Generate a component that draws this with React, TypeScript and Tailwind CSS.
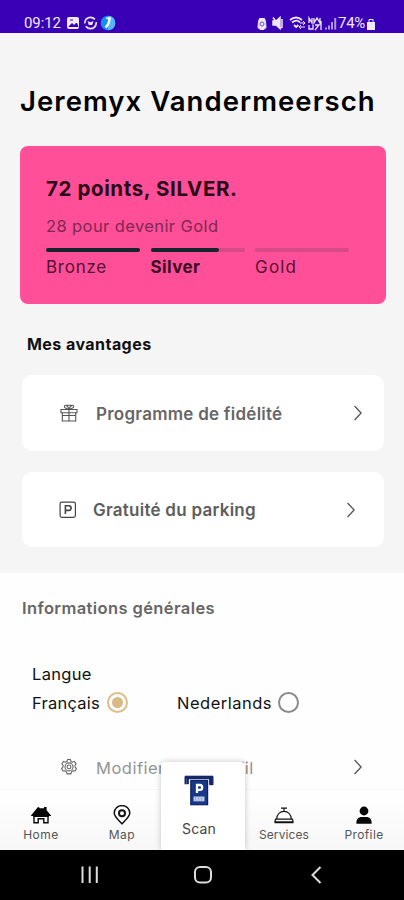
import React from 'react';

interface IconProps {
  className?: string;
}

const GiftIcon: React.FC<IconProps> = ({ className }) => (
  <svg viewBox="0 0 18 18" className={className} fill="none" stroke="currentColor" strokeWidth="1.1">
    <path d="M1 5.5h16v3.2H1zM2.3 8.7V17h13.4V8.7M9 5.5V17M2.3 11.5h13.4" />
    <path d="M9 5.3C7.8 2 5.6.3 4.6 1.7S5.6 5 9 5.3zM9 5.3c1.2-3.3 3.4-5 4.4-3.6S12.4 5 9 5.3zM6.5 1.3h5" />
  </svg>
);

const ParkingIcon: React.FC<IconProps> = ({ className }) => (
  <svg viewBox="0 0 18 18" className={className} fill="none" stroke="currentColor" strokeWidth="1.2">
    <rect x="1.1" y="1.1" width="15.3" height="15.3" rx="1.8" />
    <path d="M6.4 13V4.8h3.4a2.3 2.3 0 0 1 0 4.6H6.4" strokeWidth="1.6" />
  </svg>
);

const GearIcon: React.FC<IconProps> = ({ className }) => (
  <svg viewBox="0 0 18 18" className={className} fill="none" stroke="currentColor" strokeWidth="1.1">
    <path d="M7.6 1.5h2.8l.6 2 1.5.7 1.9-.8 1.7 2.3-1.2 1.7.2 1.7 1.3 1.5-1.4 2.4-2.1-.2-1.4 1-.6 2.1H7.1l-.6-2.1-1.4-1-2.1.2-1.4-2.4 1.3-1.5.2-1.7-1.2-1.7 1.7-2.3 1.9.8 1.5-.7z" />
    <circle cx="9" cy="8.9" r="4" />
    <circle cx="9" cy="8.9" r="1.9" />
  </svg>
);

const Chevron: React.FC<IconProps> = ({ className }) => (
  <svg viewBox="0 0 8 16" className={className} fill="none" stroke="#555" strokeWidth="1.3">
    <path d="M.6 1l6.5 7-6.5 7" />
  </svg>
);

const HomeIcon = () => (
  <svg viewBox="0 0 20 18" className="h-[18px] w-5" fill="#080808">
    <path d="M0 9.4L7.2.8 9 2.2h4V1h2.6v3.2L20 9.4v.6H0z" />
    <path d="M3 9.5h14v7.2h-4.2v-4H7.2v4H3z" fill="#fff" stroke="#080808" strokeWidth="1.4" />
    <path d="M2.3 9h15.4v2H2.3z" />
  </svg>
);

const PinIcon = () => (
  <svg viewBox="0 0 18 20" className="h-5 w-[18px]" fill="none" stroke="#111">
    <path d="M9 18.8C6 15.5 1.2 11.5 1.2 7.9a7.8 7.3 0 0 1 15.6 0c0 3.6-4.8 7.6-7.8 10.9z" strokeWidth="1.5" />
    <circle cx="9" cy="8.3" r="3" strokeWidth="2" />
  </svg>
);

const BellIcon = () => (
  <svg viewBox="0 0 20 17" className="h-[17px] w-5" fill="none" stroke="#111" strokeWidth="1.2">
    <path d="M7 1.2h6M10 1.2v3M2.7 12C3 7.4 6 4.4 10 4.4s7 3 7.3 7.6zM1.5 12.2h17l.6 3H.9z" />
    <path d="M.8 15.4h18.4" strokeWidth="1.7" />
  </svg>
);

const ProfileIcon = () => (
  <svg viewBox="0 0 16 18" className="h-[18px] w-4" fill="#080808">
    <circle cx="8" cy="5" r="4.4" />
    <path d="M.4 17.8v-1.5c0-3.1 2.3-5.3 5-5.3h5.2c2.7 0 5 2.2 5 5.3v1.5z" />
  </svg>
);

const ScanIcon = () => (
  <svg viewBox="0 0 30 31" className="h-[31px] w-[30px]" fill="none">
    <path d="M1.6 9.2V2h26.8v7.2h-2.2V4" stroke="#14286b" strokeWidth="2.2" strokeLinejoin="round" />
    <path d="M3.8 9.2V4" stroke="#14286b" strokeWidth="2.2" />
    <path d="M1 .7h28v3.6H1z" fill="#14286b" />
    <rect x="6.8" y="5.5" width="16.8" height="24.2" fill="#17388a" stroke="#0d2260" strokeWidth="1.2" />
    <path d="M13 18V10h2.8a2.4 2.4 0 0 1 0 4.8H13" stroke="#fff" strokeWidth="2.3" />
    <path d="M9.5 21.5h11v4.8h-11z" fill="#bcc8e4" />
    <path d="M11.5 21.5v4.8M14.5 21.5v4.8M17.5 21.5v4.8" stroke="#8fa1cc" strokeWidth=".7" />
  </svg>
);

const StatusBar = () => (
  <header className="flex h-[33px] shrink-0 items-end bg-[#3a00b5] pl-6 pr-7 pb-px text-[#eee8ff]">
    <span className="w-[42px] font-['Roboto'] text-[15px] leading-[17px] tracking-[-0.1px]">09:12</span>
    <svg viewBox="0 0 50 17" className="h-[17px] w-[50px]" fill="none">
      <rect x="1" y="2" width="12" height="12" rx="2" fill="currentColor" />
      <path d="M3 11.5l3-3 2 2 2.5-2.5 1.5 3.5zM4 5h3" fill="#3a00b5" stroke="#3a00b5" />
      <circle cx="24.5" cy="8" r="5.7" stroke="currentColor" strokeWidth="1.7" strokeDasharray="14 3" />
      <path d="M21.5 6l3 1.2 3-1.2-1.3 4h-3.4z" fill="currentColor" />
      <circle cx="42" cy="8" r="7.3" fill="#1390f4" />
      <path d="M42 .7a7.3 7.3 0 0 1 0 14.6z" fill="#55b5ff" />
      <path d="M43.5 2.5c0 4.5-1 7.5-4 10" stroke="#fff" strokeWidth="2.4" />
      <path d="M40 3.3h4.6" stroke="#fff" strokeWidth="1.5" />
    </svg>
    <svg viewBox="0 0 84 17" className="ml-auto h-[17px] w-[84px]" fill="none" stroke="currentColor">
      <path d="M2.5 6.5l1-3h5l1 3 .5 6L8 14.5H4l-2-2z" fill="currentColor" />
      <circle cx="6" cy="9" r="2" stroke="#6f48c9" />
      <path d="M17 6h3l4-3.5v11L20 10h-3zM17 2.5l8 11M26 4v9" fill="currentColor" strokeWidth="1.5" />
      <path d="M34 5c4-3.3 8-3.3 12 0M36 7.5c3-2.3 6-2.3 8 0M38 10l2.2 2 2.2-2" strokeWidth="1.8" />
      <path d="M44 8h5M47 6l2 2-2 2M49 12h-6M45 10l-2 2 2 2" />
      <path d="M53 8V3l3 5V3M58 3v5l3-5 3 5V3M53 10v4h4v-4M59 10h4l-4 5M65 6v9" strokeWidth="1.3" />
      <path d="M70 14.5v-2M73 14.5v-4M76 14.5V7M79.2 14.5V3" strokeWidth="2" strokeOpacity=".65" />
    </svg>
    <span className="ml-[-2px] font-['Roboto'] text-[15px] leading-[17px] tracking-[-0.3px]">74%</span>
    <svg viewBox="0 0 10 15" className="ml-px h-[15px] w-[10px]" fill="currentColor">
      <path d="M1 5h8v8H1z" /><path d="M3 5V2.5h4V5" fill="none" stroke="currentColor" />
    </svg>
  </header>
);

interface LevelProps {
  label: string;
  progress: number;
  labelClass: string;
}

const Level: React.FC<LevelProps> = ({ label, progress, labelClass }) => (
  <div className="w-[94px]">
    <div className="h-[3.5px] rounded-full bg-[#d64a88]">
      <div className="h-full rounded-full bg-[#16242d]" style={{ width: `${progress}%` }} />
    </div>
    <div className={`mt-[3px] whitespace-nowrap text-[17px] leading-6 ${labelClass}`}>{label}</div>
  </div>
);

const App: React.FC = () => {
  return (
    <div className="relative flex h-[900px] w-[404px] flex-col overflow-hidden bg-white font-['Inter',sans-serif] text-[#111]">
      <StatusBar />

      {/* Loyalty status and benefits */}
      <main className="h-[540px] shrink-0 bg-[#f5f5f5] px-5 pt-[50px]">
        <h1 className="h-[62.5px] whitespace-nowrap text-[27.5px] font-semibold leading-9 tracking-[1.05px] text-black">
          Jeremyx Vandermeersch
        </h1>

        <section className="h-[158px] w-[366px] rounded-lg bg-[#ff4f98] pl-[26px] pt-[30.5px]">
          <h2 className="whitespace-nowrap text-[20.5px] font-bold leading-[26px] tracking-[0.6px] text-[#2a0717]">72 points, SILVER.</h2>
          <p className="mt-3 whitespace-nowrap text-[16.5px] leading-6 tracking-[0.4px] text-[#802850]">28 pour devenir Gold</p>
          <div className="mt-[10px] flex gap-[10.5px]">
            <Level label="Bronze" progress={100} labelClass="tracking-[0.75px] text-[#541331]" />
            <Level label="Silver" progress={73} labelClass="font-bold tracking-[0.4px] text-[#3b0d22]" />
            <Level label="Gold" progress={0} labelClass="tracking-[1.2px] text-[#541331]" />
          </div>
        </section>

        <h2 className="mt-[28px] h-[43.5px] whitespace-nowrap pl-[7px] text-base font-bold leading-6 tracking-[0.45px]">Mes avantages</h2>

        <button className="ml-[2px] flex h-[76px] w-[362px] items-center rounded-[10px] bg-white pr-[22px] text-[#555]">
          <GiftIcon className="ml-[38px] h-[18px] w-[18px]" />
          <span className="ml-[18px] whitespace-nowrap pt-[3px] text-[17px] font-semibold tracking-[0.25px] text-[#666]">Programme de fidélité</span>
          <Chevron className="ml-auto h-4 w-2" />
        </button>
        <button className="ml-[2px] mt-[21px] flex h-[75px] w-[362px] items-center rounded-[10px] bg-white pr-[29px] text-[#444]">
          <ParkingIcon className="ml-[37px] h-[18px] w-[18px]" />
          <span className="ml-4 whitespace-nowrap pt-[2px] text-[17px] font-semibold tracking-[0.25px] text-[#5d5d5d]">Gratuité du parking</span>
          <Chevron className="ml-auto h-4 w-2" />
        </button>
      </main>

      {/* General information */}
      <section className="h-[216px] shrink-0 bg-[#fefefe] pt-[23px]">
        <h2 className="whitespace-nowrap pl-[22px] text-[16.5px] font-semibold leading-6 tracking-[0.4px] text-[#666]">Informations générales</h2>
        <div className="mt-[42px] pl-8">
          <p className="text-[16.5px] leading-6 tracking-[0.3px]">Langue</p>
          <div className="mt-1 flex h-6 items-center">
            <span className="w-[75px] whitespace-nowrap pt-[2px] text-[16.5px] tracking-[0.25px]">Français</span>
            <span className="flex h-[21px] w-[21px] items-center justify-center rounded-full border-2 border-[#dfbd88]">
              <span className="h-[11px] w-[11px] rounded-full bg-[#d9b985]" />
            </span>
            <span className="ml-[49px] w-[101px] whitespace-nowrap pt-[2px] text-[16.5px] tracking-[0.5px]">Nederlands</span>
            <span className="h-[21px] w-[21px] rounded-full border-2 border-[#8b8b8b]" />
          </div>
        </div>
        <div className="mt-[39px] flex h-7 items-center pl-[60px] pr-[42px] text-[#666]">
          <GearIcon className="h-[18px] w-[18px]" />
          <span className="ml-[18px] whitespace-nowrap pt-[2px] text-[16.5px] tracking-[0.5px] text-[#949494]">Modifier mon profil</span>
          <Chevron className="ml-auto h-4 w-2" />
        </div>
      </section>

      {/* Tab bar */}
      <nav className="relative h-[61px] shrink-0 border-t border-[#f7f7f7] bg-gradient-to-b from-white to-[#f7f7f7] text-xs leading-4 text-[#555]">
        <div className="flex h-full pt-[15px]">
          <div className="flex w-[82px] flex-col items-center pt-px"><HomeIcon /><span className="mt-[3px] tracking-[0.5px]">Home</span></div>
          <div className="flex w-20 flex-col items-center"><PinIcon /><span className="mt-[2px] tracking-[0.5px]">Map</span></div>
          <div className="w-[82px]" />
          <div className="flex w-20 flex-col items-center pt-[2px]"><BellIcon /><span className="mt-[3px] tracking-[0.1px]">Services</span></div>
          <div className="flex w-20 flex-col items-center pt-px"><ProfileIcon /><span className="mt-[3px] tracking-[0.4px]">Profile</span></div>
        </div>
        <div className="absolute -top-7 left-[161px] flex h-[88px] w-[84px] flex-col items-center rounded-t bg-white pt-[13px] pr-2 shadow-[0_0_6px_rgba(0,0,0,0.22)]">
          <ScanIcon />
          <span className="mt-[13px] text-sm leading-5 tracking-[0.2px] text-[#444]">Scan</span>
        </div>
      </nav>

      {/* System navigation */}
      <footer className="relative flex h-[50px] shrink-0 items-center bg-black">
        <svg viewBox="0 0 404 50" className="h-[50px] w-[404px]" fill="none" stroke="#ddd" strokeWidth="2">
          <path d="M82.5 16.5v16.5M89.7 16.5v16.5M96.8 16.5v16.5" />
          <rect x="195" y="17" width="16" height="15.5" rx="5" />
          <path d="M320.5 17l-8 8 8 8" />
        </svg>
      </footer>
    </div>
  );
};

export default App;
